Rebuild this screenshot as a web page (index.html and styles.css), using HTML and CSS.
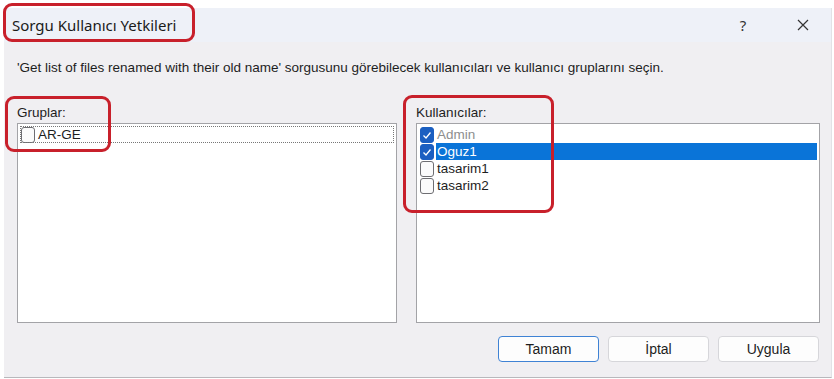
FILE: index.html
```html
<!DOCTYPE html>
<html lang="tr">
<head>
  <meta charset="UTF-8">
  <title>Sorgu Kullanıcı Yetkileri</title>
  <link rel="stylesheet" href="styles.css">
</head>
<body>

<div class="pencere">
  <div class="baslik">
    <span class="baslik-yazi">Sorgu Kullanıcı Yetkileri</span>
    <span class="baslik-dugme yardim">?</span>
    <span class="baslik-dugme kapat">
      <svg width="12" height="12" viewBox="0 0 12 12"><path d="M1 1 L11 11 M11 1 L1 11" stroke="#333" stroke-width="1.2" fill="none"/></svg>
    </span>
  </div>

  <div class="icerik">
    <p class="aciklama">'Get list of files renamed with their old name' sorgusunu görebilecek kullanıcıları ve kullanıcı gruplarını seçin.</p>

    <div class="listeler">
      <div class="sutun">
        <div class="etiket">Gruplar:</div>
        <div class="liste">
          <div class="satir odak">
            <span class="kutu"></span>
            <span class="ad">AR-GE</span>
          </div>
        </div>
      </div>

      <div class="sutun">
        <div class="etiket">Kullanıcılar:</div>
        <div class="liste">
          <div class="satir pasif">
            <span class="kutu secili"></span>
            <span class="ad">Admin</span>
          </div>
          <div class="satir aktif">
            <span class="kutu secili"></span>
            <span class="ad">Oguz1</span>
          </div>
          <div class="satir">
            <span class="kutu"></span>
            <span class="ad">tasarim1</span>
          </div>
          <div class="satir">
            <span class="kutu"></span>
            <span class="ad">tasarim2</span>
          </div>
        </div>
      </div>
    </div>

    <div class="dugmeler">
      <button class="varsayilan">Tamam</button>
      <button>İptal</button>
      <button>Uygula</button>
    </div>
  </div>

  <!-- isaretler -->
  <div class="isaret isaret-baslik"></div>
  <div class="isaret isaret-gruplar"></div>
  <div class="isaret isaret-kullanicilar"></div>
</div>

</body>
</html>
```

FILE: styles.css
```css
body {
  margin: 0;
  background: #ffffff;
  font-family: "Liberation Sans", Arial, sans-serif;
  font-size: 13.5px;
  color: #1e1e1e;
}
.pencere {
  position: relative;
  width: 827px;
  height: 369px;
  margin: 8px 0 0 4px;
  background: #f0eff2;
  border-bottom: 1px solid #b8b8bc;
  border-right: 1px solid #e2e2e6;
  display: flex;
  flex-direction: column;
}
.baslik {
  height: 34px;
  background: #eef1f8;
  display: flex;
  align-items: center;
  padding-left: 8px;
}
.baslik-yazi {
  flex: 1;
  font-family: "Noto Sans", sans-serif;
  font-size: 15px;
  color: #1a1a1a;
}
.baslik-dugme {
  width: 56px;
  text-align: center;
  font-family: "Noto Sans", sans-serif;
  font-size: 15px;
  color: #333;
}
.yardim {
  margin-right: 7px;
}
.kapat {
  width: 50px;
  display: flex;
  justify-content: center;
  margin-right: 3px;
}
.icerik {
  flex: 1;
  padding: 19px 11px 0 13px;
}
.aciklama {
  margin: 0;
  line-height: 14px;
}
.listeler {
  display: grid;
  grid-template-columns: 380px 1fr;
  gap: 19px;
  margin-top: 31px;
}
.etiket {
  line-height: 14px;
  margin-bottom: 3px;
}
.liste {
  height: 196px;
  background: #ffffff;
  border: 1px solid #a3a3a7;
  padding: 2px 2px 0 2px;
}
.satir {
  display: flex;
  align-items: center;
  height: 17px;
}
.satir.odak {
  outline: 1px dotted #777;
  outline-offset: -1px;
}
.kutu {
  width: 14px;
  height: 16px;
  border: 1px solid #6e6e72;
  border-radius: 3px;
  background: #fbfbfb;
  margin: 0 2px 0 1px;
  box-sizing: border-box;
}
.kutu.secili {
  background: #1b5fc1 url("data:image/svg+xml;utf8,<svg xmlns='http://www.w3.org/2000/svg' width='14' height='16'><path d='M3.5 8.5 L6 11 L10.5 5.5' stroke='white' stroke-width='1.3' fill='none'/></svg>") no-repeat center;
  border-color: #1b5fc1;
}
.ad {
  flex: 1;
  height: 17px;
  line-height: 17px;
  padding-left: 1px;
}
.satir.pasif .ad {
  color: #8e8e8e;
}
.satir.aktif .ad {
  background: #0a74d8;
  color: #ffffff;
}
.dugmeler {
  display: flex;
  justify-content: flex-end;
  gap: 9px;
  margin-top: 13px;
  padding-right: 1px;
}
button {
  width: 101px;
  height: 26px;
  background: #fdfdfd;
  border: 1px solid #d6d6da;
  border-radius: 4px;
  font-family: "Liberation Sans", Arial, sans-serif;
  font-size: 14px;
  color: #1e1e1e;
}
button.varsayilan {
  border: 1px solid #3f82d4;
}
.isaret {
  position: absolute;
  border: 3px solid #c8202b;
  border-radius: 9px;
}
.isaret-baslik {
  left: -1px;
  top: -5px;
  width: 186px;
  height: 33px;
}
.isaret-gruplar {
  left: 1px;
  top: 88px;
  width: 100px;
  height: 50px;
}
.isaret-kullanicilar {
  left: 399px;
  top: 87px;
  width: 145px;
  height: 112px;
}
```
